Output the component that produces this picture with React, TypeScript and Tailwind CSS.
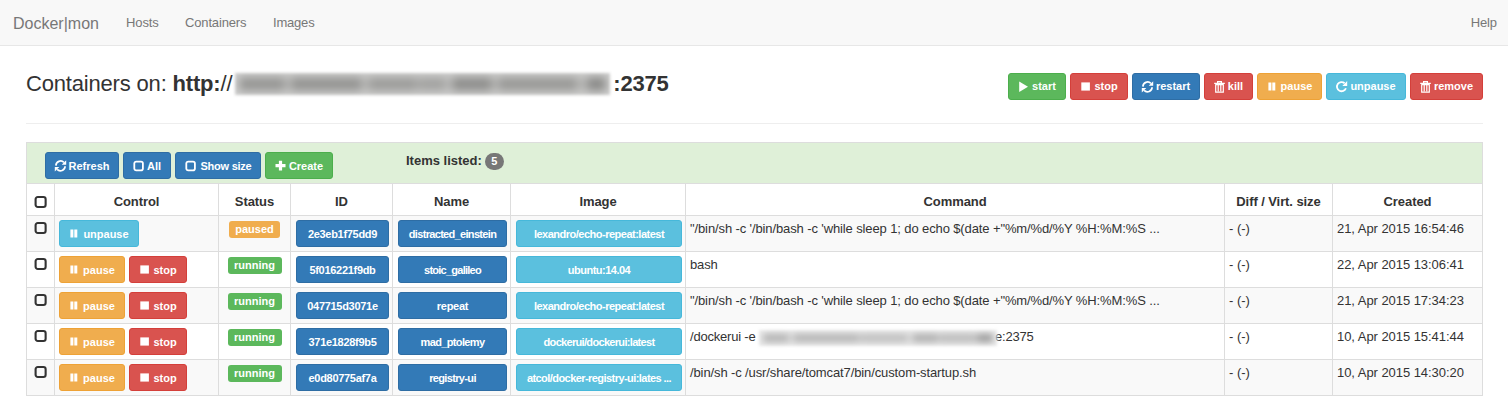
import type { ReactNode } from "react";

type IconName = "play" | "stop" | "refresh" | "trash" | "pause" | "repeat" | "plus" | "unchecked";

const glyphs: Record<IconName, ReactNode> = {
  play: <path d="M1.200.400 10 5.700 1.200 11Z" fill="currentColor" />,
  stop: <path d="M1.300 1.400h8.600v8.200H1.300z" fill="currentColor" />,
  pause: <path d="M1.400 1.500h3v8h-3zM5.300 1.500h3v8h-3z" fill="currentColor" />,
  plus: <path d="M3.900.800h3.200v3.300h3.400v3.200H7.100v3.300H3.900V7.300H.5V4.100h3.400z" fill="currentColor" />,
  unchecked: (
    <rect x="1.3" y="1.7" width="8.6" height="8.6" rx="1.9" fill="none" stroke="currentColor" strokeWidth="1.8" />
  ),
  repeat: (
    <>
      <path d="M9.900 7.200A4.600 4.600 0 1 1 8.600 2.200" fill="none" stroke="currentColor" strokeWidth="1.8" />
      <path d="M11.200 0v4.900H6.300z" fill="currentColor" />
    </>
  ),
  refresh: (
    <>
      <path d="M.9 5.600A4.700 4.700 0 0 1 8.900 2.400M10.100 6.200A4.700 4.700 0 0 1 2.100 9.400" fill="none" stroke="currentColor" strokeWidth="1.7" />
      <path d="M11.200.2v4.500H6.700zM-.2 11.600V7.100h4.500z" fill="currentColor" />
    </>
  ),
  trash: (
    <path
      d="M.2 2.400h10.600M3.600 2.400V.600h3.800v1.800M1.400 3.700h8.200M1.700 3.300v7.900h7.600V3.300M4.200 4.300v6M6.800 4.300v6"
      fill="none"
      stroke="currentColor"
      strokeWidth="1.2"
    />
  ),
};

function Icon({ name, className = "h-3 w-[11px]" }: { name: IconName; className?: string }) {
  return (
    <svg viewBox="0 0 11 12" className={`shrink-0 overflow-visible ${className}`} aria-hidden="true">
      {glyphs[name]}
    </svg>
  );
}

const tones = {
  green: "bg-[#5cb85c] border-[#4cae4c]",
  red: "bg-[#d9534f] border-[#d43f3a]",
  blue: "bg-[#337ab7] border-[#2e6da4]",
  orange: "bg-[#f0ad4e] border-[#eea236]",
  cyan: "bg-[#5bc0de] border-[#46b8da]",
};
type Tone = keyof typeof tones;

function Button({ tone, icon, label, width, textClass = "pt-[2px]" }: {
  tone: Tone;
  icon?: IconName;
  label: string;
  width: string;
  textClass?: string;
}) {
  return (
    <button
      className={`flex h-[27px] shrink-0 items-center justify-center gap-[3px] rounded-[3px] border text-[11px] leading-[17px] font-bold whitespace-nowrap text-white ${tones[tone]} ${width}`}
    >
      {icon && <Icon name={icon} />}
      <span className={textClass}>{label}</span>
    </button>
  );
}

const columns = "grid grid-cols-[28px_164px_72px_102px_118px_175px_539px_108px_150px]";
const cell = "border-r border-b border-[#ddd]";

const echoCommand = "\"/bin/sh -c '/bin/bash -c 'while sleep 1; do echo $(date +\"%m/%d/%Y %H:%M:%S ...";

const rows = [
  { status: "paused", id: "2e3eb1f75dd9", name: "distracted_einstein", nameClass: "tracking-[-0.68px]", image: "lexandro/echo-repeat:latest", imageClass: "tracking-[-0.5px]", command: echoCommand, created: "21, Apr 2015 16:54:46" },
  { status: "running", id: "5f016221f9db", name: "stoic_galileo", nameClass: "tracking-[-0.75px]", image: "ubuntu:14.04", imageClass: "tracking-[-0.5px]", command: "bash", created: "22, Apr 2015 13:06:41" },
  { status: "running", id: "047715d3071e", name: "repeat", nameClass: "tracking-[-0.25px]", image: "lexandro/echo-repeat:latest", imageClass: "tracking-[-0.5px]", command: echoCommand, created: "21, Apr 2015 17:34:23" },
  { status: "running", id: "371e1828f9b5", name: "mad_ptolemy", nameClass: "tracking-[-0.65px]", image: "dockerui/dockerui:latest", imageClass: "tracking-[-0.68px]", command: null, created: "10, Apr 2015 15:41:44" },
  { status: "running", id: "e0d80775af7a", name: "registry-ui", nameClass: "tracking-[-0.65px]", image: "atcol/docker-registry-ui:lates ...", imageClass: "tracking-[-0.56px]", command: "/bin/sh -c /usr/share/tomcat7/bin/custom-startup.sh", created: "10, Apr 2015 14:30:20" },
];

const headings = ["Control", "Status", "ID", "Name", "Image", "Command", "Diff / Virt. size", "Created"];

function HostMask() {
  return (
    <span className="ml-[3px] flex h-[22px] w-[375px] items-center overflow-hidden bg-[#d0d0cf] blur-[1.5px]">
      <span className="flex h-[14px] w-full gap-px px-1 blur-[4px]">
        <span className="w-[46px] bg-[#969694]" />
        <span className="w-[4px] bg-[#b4b4b2]" />
        <span className="w-[72px] bg-[#949492]" />
        <span className="w-[4px] bg-[#b8b8b6]" />
        <span className="w-[50px] bg-[#9c9c9a]" />
        <span className="w-[28px] bg-[#a2a2a0]" />
        <span className="w-[4px] bg-[#bcbcba]" />
        <span className="w-[40px] bg-[#8e8e8c]" />
        <span className="w-[4px] bg-[#b4b4b2]" />
        <span className="w-[80px] bg-[#989896]" />
        <span className="w-[8px] bg-[#b4b4b2]" />
        <span className="w-[20px] bg-[#8a8a88]" />
      </span>
    </span>
  );
}

function CommandMask() {
  return (
    <span className="mt-[2px] flex h-4 w-[238px] items-center overflow-hidden bg-[#ebebeb] blur-[1.5px]">
      <span className="flex h-[8px] w-full gap-px px-1 blur-[3px]">
        <span className="w-[26px] bg-[#b0b0b0]" />
        <span className="w-[4px] bg-[#cccccc]" />
        <span className="w-[66px] bg-[#b2b2b2]" />
        <span className="w-[48px] bg-[#bcbcbc]" />
        <span className="w-[4px] bg-[#d0d0d0]" />
        <span className="w-[26px] bg-[#acacac]" />
        <span className="w-[38px] bg-[#b8b8b8]" />
        <span className="w-[16px] bg-[#999999]" />
      </span>
    </span>
  );
}

export default function App() {
  return (
    <div className="h-[407px] w-[1508px] overflow-hidden bg-white font-['Liberation_Sans',Arial,sans-serif] text-[13px] leading-[18px] text-[#333]">
      <nav className="flex h-[46px] items-center border-b border-[#e7e7e7] bg-[#f8f8f8] text-[#777]">
        <a className="ml-[13px] w-[113px] pt-[2px] text-base">Docker|mon</a>
        <a className="w-[59px] tracking-[-0.1px]">Hosts</a>
        <a className="w-[88px] tracking-[-0.15px]">Containers</a>
        <a className="tracking-[-0.2px]">Images</a>
        <a className="mr-[11px] ml-auto tracking-[-0.1px]">Help</a>
      </nav>

      <main className="mx-[26px] w-[1457px]">
        <header className="flex h-[78px] items-start justify-between border-b border-[#eee] pt-[27px]">
          <h1 className="flex h-[22px] items-center text-[22px] leading-[22px] tracking-[-0.18px] whitespace-pre">
            Containers on: <b>http:</b>//
            <HostMask />
            <b className="ml-[3px] tracking-[-0.25px]">:2375</b>
          </h1>
          <div className="flex gap-1">
            <Button tone="green" icon="play" label="start" width="w-[58px]" textClass="" />
            <Button tone="red" icon="stop" label="stop" width="w-[58px]" textClass="" />
            <Button tone="blue" icon="refresh" label="restart" width="w-[68px]" textClass="" />
            <Button tone="red" icon="trash" label="kill" width="w-[49px]" textClass="" />
            <Button tone="orange" icon="pause" label="pause" width="w-[65px]" textClass="" />
            <Button tone="cyan" icon="repeat" label="unpause" width="w-[80px]" textClass="" />
            <Button tone="red" icon="trash" label="remove" width="w-[73px]" textClass="" />
          </div>
        </header>

        <section className="mt-[18px] border-t border-l border-[#ddd]">
          <div className={`flex h-[41px] bg-[#dff0d8] pt-[9px] pl-[18px] ${cell}`}>
            <div className="flex gap-1">
              <Button tone="blue" icon="refresh" label="Refresh" width="w-[74px]" />
              <Button tone="blue" icon="unchecked" label="All" width="w-[48px]" />
              <Button tone="blue" icon="unchecked" label="Show size" width="w-[86px]" textClass="pt-[2px] pl-[2px] tracking-[-0.25px]" />
              <Button tone="green" icon="plus" label="Create" width="w-[68px]" />
            </div>
            <div className="ml-[73px] flex h-[18px] gap-[3px] font-bold">
              <span>Items listed:</span>
              <span className="mt-px h-[17px] w-[19px] rounded-full bg-[#777] text-center text-[11px] leading-[17px] text-white">5</span>
            </div>
          </div>

          <div className={`${columns} h-8 font-bold`}>
            <div className={`${cell} flex items-center justify-center pt-[5px]`}>
              <Icon name="unchecked" className="h-[14px] w-[13px]" />
            </div>
            {headings.map((heading) => (
              <div key={heading} className={`${cell} pt-[9px] text-center tracking-[-0.08px]`}>{heading}</div>
            ))}
          </div>

          {rows.map((row) => (
            <div key={row.id} className={`${columns} h-9 nth-[2n+3]:bg-[#f9f9f9]`}>
              <div className={`${cell} flex justify-center pt-[5px]`}>
                <Icon name="unchecked" className="h-[14px] w-[13px]" />
              </div>
              <div className={`${cell} flex gap-1 pt-1 pl-1`}>
                {row.status === "paused" ? (
                  <Button tone="cyan" icon="pause" label="unpause" width="w-[80px]" />
                ) : (
                  <>
                    <Button tone="orange" icon="pause" label="pause" width="w-[66px]" />
                    <Button tone="red" icon="stop" label="stop" width="w-[58px]" />
                  </>
                )}
              </div>
              <div className={`${cell} flex justify-center pt-[5px]`}>
                <span
                  className={`h-[17px] rounded-[3px] text-center text-[11px] leading-4 font-bold text-white ${
                    row.status === "paused" ? "w-[51px] bg-[#f0ad4e]" : "w-[54px] bg-[#5cb85c]"
                  }`}
                >
                  {row.status}
                </span>
              </div>
              <div className={`${cell} pt-1 pl-[5px]`}>
                <Button tone="blue" label={row.id} width="w-[93px]" textClass="pt-[2px] tracking-[-0.3px]" />
              </div>
              <div className={`${cell} pt-1 pl-[5px]`}>
                <Button tone="blue" label={row.name} width="w-[109px]" textClass={`pt-[2px] ${row.nameClass}`} />
              </div>
              <div className={`${cell} pt-1 pl-[5px]`}>
                <Button tone="cyan" label={row.image} width="w-[166px]" textClass={`pt-[2px] ${row.imageClass}`} />
              </div>
              <div className={`${cell} flex pt-1 pl-1 tracking-[-0.115px] whitespace-pre`}>
                {row.command ?? (
                  <>
                    <span className="w-[69px] tracking-[-0.2px]">/dockerui -e</span>
                    <CommandMask />
                    <span className="-ml-[2px] tracking-[-0.2px]">e:2375</span>
                  </>
                )}
              </div>
              <div className={`${cell} pt-1 pl-1`}>- (-)</div>
              <div className={`${cell} pt-1 pl-1 tracking-[-0.05px]`}>{row.created}</div>
            </div>
          ))}
        </section>
      </main>
    </div>
  );
}
